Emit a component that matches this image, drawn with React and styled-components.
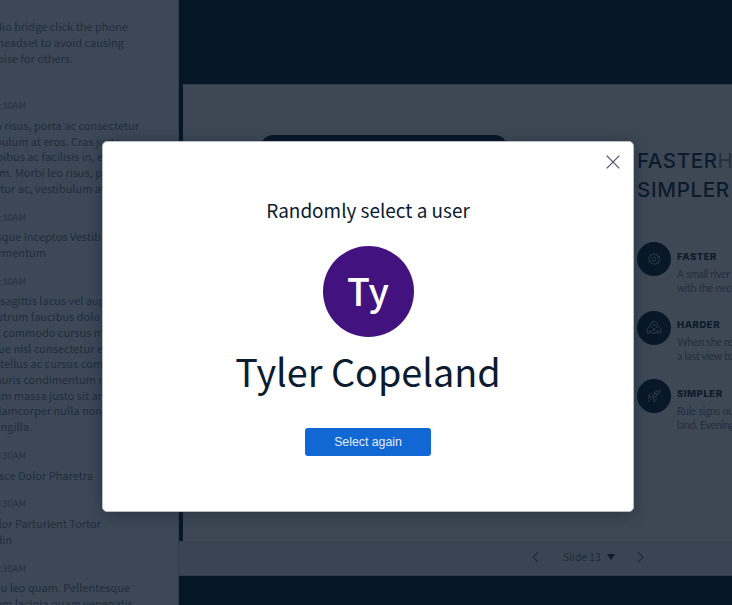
import React from "react";
import styled, { createGlobalStyle } from "styled-components";

const sans = '"Noto Sans CJK SC", "Noto Sans", sans-serif';

const GlobalStyle = createGlobalStyle`
  * { box-sizing: border-box; }
  body { margin: 0; overflow: hidden; background: #061727; }
`;

const Screen = styled.div`
  position: relative;
  display: grid;
  grid-template-columns: 179px 1fr;
  width: 732px;
  height: 605px;
  overflow: hidden;
  background: #061727;
  font-family: ${sans};
`;

const Sidebar = styled.aside`
  height: 605px;
  padding-top: 19.3px;
  overflow: hidden;
  background: #3c4856;
  border-right: 1px solid #303d4b;
  color: #202d3d;
`;

const Message = styled.article`
  display: flex;
  flex-direction: column;
  margin-bottom: ${(p) => p.$gap ?? 13.1}px;
`;

const Time = styled.time`
  display: flex;
  justify-content: flex-end;
  width: 26px;
  height: 15.6px;
  margin-bottom: 4px;
  font-size: 9.4px;
  line-height: 15.6px;
  white-space: nowrap;
  color: #253241;
`;

const Line = styled.div`
  display: flex;
  justify-content: flex-end;
  width: ${(p) => p.$end}px;
  height: 15.73px;
  font-size: 11px;
  line-height: 15.73px;
  white-space: pre;
`;

const Stage = styled.main`
  display: flex;
  flex-direction: column;
  padding-top: 84px;
  min-width: 0;
`;

const Slide = styled.section`
  display: flex;
  justify-content: space-between;
  height: 457px;
  margin-left: 4px;
  background: #3d4854;
  border-top: 1px solid #303d4b;
  overflow: hidden;
`;

const Device = styled.div`
  flex: none;
  width: 246px;
  height: 340px;
  margin: 50px 0 0 78px;
  border-radius: 12px;
  background: #061727;
`;

const Copy = styled.div`
  flex: none;
  width: 95px;
  padding-top: 61px;
  overflow: hidden;
`;

const Headline = styled.h1`
  margin: 0 0 26px;
  font: 500 20.5px/29px Inter, sans-serif;
  letter-spacing: 0.6px;
  white-space: nowrap;
  color: #0b1b2b;
  span { color: #253240; }
  div + div { letter-spacing: 0.7px; }
`;

const Feature = styled.div`
  display: flex;
  gap: 6px;
  height: 68.6px;
`;

const Badge = styled.div`
  display: flex;
  flex: none;
  align-items: center;
  justify-content: center;
  width: 34px;
  height: 34px;
  margin-top: 12px;
  border-radius: 50%;
  background: #081828;
  svg { width: 16px; height: 16px; fill: none; stroke: #2c3846; stroke-width: 1; }
`;

const FeatureText = styled.div`
  padding-top: 19.5px;
  font: 10.5px/14.3px Lato, sans-serif;
  letter-spacing: -0.28px;
  white-space: nowrap;
  color: #222f3e;
  h2 {
    margin: 0 0 3px;
    font: 800 9.6px/14px Inter, sans-serif;
    letter-spacing: 0.5px;
    color: #0c1b2a;
  }
`;

const Pager = styled.footer`
  display: flex;
  align-items: center;
  height: 35px;
  padding: 0 0 3px 353px;
  background: #394552;
  border-top: 1px solid #34404e;
  border-bottom: 1px solid #303c4a;
  font-size: 10.3px;
  line-height: 15px;
  color: #1d2a39;
  svg { display: block; flex: none; }
  span { width: 38px; margin: -2px 6px 0 24px; white-space: nowrap; }
`;

const Chevron = styled.svg`
  width: 7px;
  height: 12px;
  margin-left: ${(p) => p.$left ?? 0}px;
  fill: none;
  stroke: #1c2938;
  stroke-width: 1.1;
`;

const Overlay = styled.div`
  position: absolute;
  inset: 0;
  padding: 141px 0 0 102px;
`;

const Dialog = styled.section`
  position: relative;
  display: flex;
  flex-direction: column;
  align-items: center;
  width: 532px;
  height: 371px;
  padding-top: 53px;
  border: 1px solid #b9bcc4;
  border-radius: 5px;
  background: #fff;
  box-shadow: 0 3px 16px rgba(20, 32, 48, 0.45);
  color: #0b1b30;
`;

const Close = styled.button`
  position: absolute;
  top: 13px;
  right: 13.5px;
  width: 14px;
  height: 14px;
  padding: 0;
  border: 0;
  background: none;
  svg { display: block; stroke: #4c4f68; stroke-width: 1.2; }
`;

const Title = styled.h2`
  margin: 0;
  font-size: 18.95px;
  font-weight: 400;
  line-height: 30px;
  white-space: nowrap;
`;

const Avatar = styled.div`
  width: 91px;
  height: 91px;
  margin-top: 21px;
  border-radius: 50%;
  background: #42127f;
  color: #fff;
  font-size: 37.5px;
  font-weight: 500;
  line-height: 88px;
  text-align: center;
`;

const Name = styled.div`
  margin-top: 5px;
  font-size: 37.8px;
  line-height: 58px;
  white-space: nowrap;
`;

const Action = styled.button`
  width: 126px;
  height: 28px;
  margin-top: 28px;
  padding: 0;
  border: 0;
  border-radius: 3px;
  background: #1167d3;
  color: #e3edfa;
  font: 12.3px/28px "Liberation Sans", Arial, sans-serif;
`;

const messages = [
  { gap: 32, lines: [["dio bridge click the phone", 128], ["headset to avoid causing", 124], ["oise for others.", 73]] },
  { time: true, lines: [["o risus, porta ac consectetur", 139], ["bulum at eros. Cras justo,", 124], ["pibus ac facilisis in, e", 103], ["m. Morbi leo risus, p", 102], ["tur ac, vestibulum at", 105]] },
  { time: true, lines: [["sque Inceptos Vestib", 101], ["rmentum", 46]] },
  { time: true, lines: [["sagittis lacus vel aug", 105], ["utrum faucibus dolo", 100], ["commodo cursus m", 104], ["ue nisl consectetur e", 103], ["tellus ac cursus com", 103], ["auris condimentum n", 105], ["um massa justo sit am", 108], ["lamcorper nulla non", 102], ["ngilla.", 32]] },
  { time: true, lines: [["sce Dolor Pharetra", 93]] },
  { time: true, lines: [["lor Parturient Tortor", 101], ["din", 12]] },
  { time: true, lines: [["eu leo quam. Pellentesque", 130], ["em lacinia quam venenatis", 133]] },
];

const GearIcon = () => (
  <svg viewBox="0 0 16 16">
    <circle cx="8" cy="8" r="2" />
    <path d="M8 2l1 2 2-1 .5 2.2 2.2.3-1 2 1.6 1.5-2 1 .3 2.2-2.3-.2L9 14l-1.5-1.7L5.6 13 5 10.8l-2.5-.3 1-2L2 7l2.1-1-.2-2.3 2.3.3z" />
  </svg>
);

const SummitIcon = () => (
  <svg viewBox="0 0 16 16">
    <path d="M1 13V9l3-3 1-3 3-2 3 2 1 3 3 3v4h-3v-3l-2 3H6l-2-3v3zM5 8l3-4 3 4M7 11l1-3 1 3" />
  </svg>
);

const RocketIcon = () => (
  <svg viewBox="0 0 16 16">
    <path d="M6 9l3-5 5-2-2 5-5 3zM6 5L2 8l3 1M7 10l1 4 3-4M5 11l-3 3M4 9l-2 2" />
    <circle cx="10" cy="6" r="1" />
  </svg>
);

const features = [
  { title: "FASTER", Icon: GearIcon, lines: ["A small river", "with the nece"] },
  { title: "HARDER", Icon: SummitIcon, lines: ["When she rea", "a last view ba"] },
  { title: "SIMPLER", Icon: RocketIcon, lines: ["Rule signs out", "land. Evening"] },
];

export default function App() {
  return (
    <>
      <GlobalStyle />
      <Screen>
        <Sidebar>
          {messages.map((m, i) => (
            <Message key={i} $gap={m.gap}>
              {m.time && <Time>:30AM</Time>}
              {m.lines.map(([text, end]) => <Line key={text} $end={end}>{text}</Line>)}
            </Message>
          ))}
        </Sidebar>
        <Stage>
          <Slide>
            <Device />
            <Copy>
              <Headline>
                <div>FASTER<span>H</span></div>
                <div>SIMPLER</div>
              </Headline>
              {features.map(({ title, Icon, lines }) => (
                <Feature key={title}>
                  <Badge><Icon /></Badge>
                  <FeatureText>
                    <h2>{title}</h2>
                    {lines.map((l) => <div key={l}>{l}</div>)}
                  </FeatureText>
                </Feature>
              ))}
            </Copy>
          </Slide>
          <Pager>
            <Chevron viewBox="0 0 7 12"><path d="M6 1L1 6l5 5" /></Chevron>
            <span>Slide 13</span>
            <svg width="8" height="6" viewBox="0 0 8 6"><path d="M0 0h8L4 6z" fill="#0d1b2a" /></svg>
            <Chevron $left={22} viewBox="0 0 7 12"><path d="M1 1l5 5-5 5" /></Chevron>
          </Pager>
        </Stage>
        <Overlay>
          <Dialog role="dialog">
            <Close aria-label="Close">
              <svg width="14" height="14" viewBox="0 0 14 14"><path d="M.7.7l12.6 12.6M13.3.7L.7 13.3" /></svg>
            </Close>
            <Title>Randomly select a user</Title>
            <Avatar>Ty</Avatar>
            <Name>Tyler Copeland</Name>
            <Action>Select again</Action>
          </Dialog>
        </Overlay>
      </Screen>
    </>
  );
}
